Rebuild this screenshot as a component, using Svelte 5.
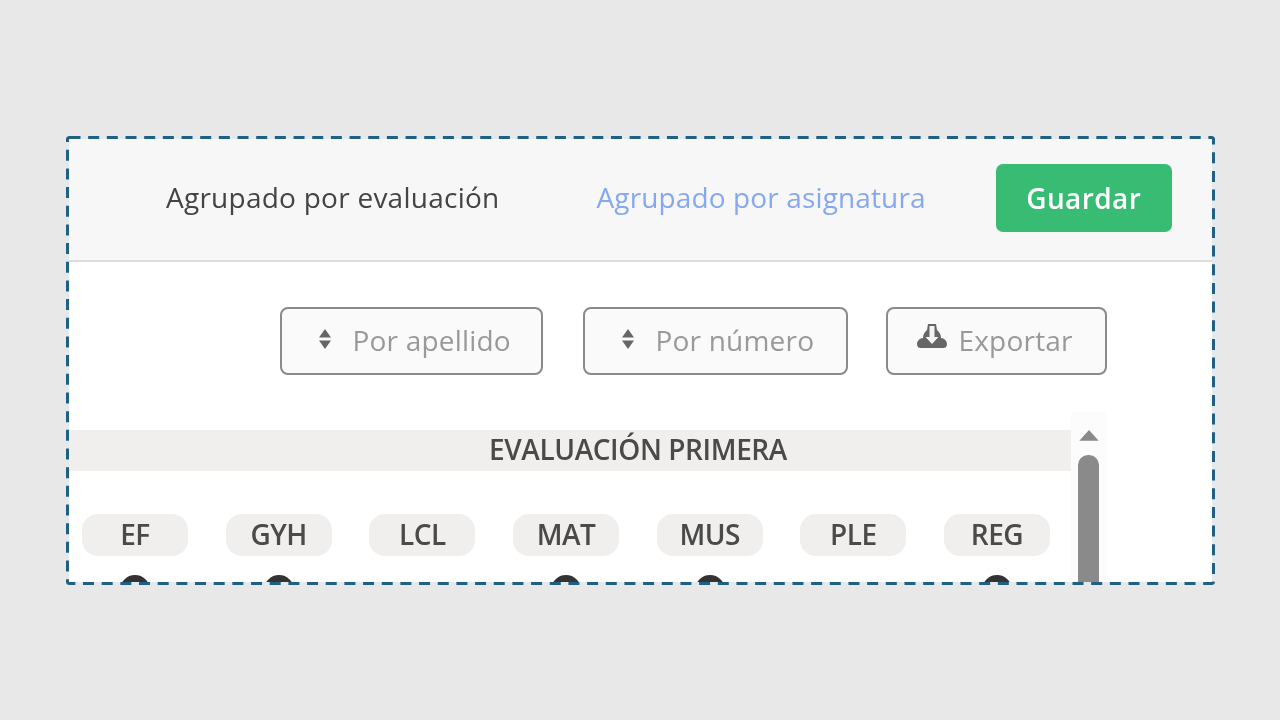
<script>
  const subjects = [
    { name: 'EF', icon: true },
    { name: 'GYH', icon: true },
    { name: 'LCL', icon: false },
    { name: 'MAT', icon: true },
    { name: 'MUS', icon: true },
    { name: 'PLE', icon: false },
    { name: 'REG', icon: true }
  ];
</script>

<div class="frame">
  <div class="panel">
    <header class="head">
      <span class="tab">Agrupado por evaluación</span>
      <span class="tab link">Agrupado por asignatura</span>
      <button class="save">Guardar</button>
    </header>

    <div class="tools">
      <button class="tool sort">
        <svg width="14" height="20" viewBox="0 0 14 20"><path d="M7 0l6 8.500H1zM7 20l-6-8.500h12z" fill="#666" /></svg>
        <span>Por apellido</span>
      </button>
      <button class="tool sort second">
        <svg width="14" height="20" viewBox="0 0 14 20"><path d="M7 0l6 8.500H1zM7 20l-6-8.500h12z" fill="#666" /></svg>
        <span>Por número</span>
      </button>
      <button class="tool export">
        <svg width="32" height="26" viewBox="0 0 32 26">
          <path d="M12 1h8l1 6c2 2 4 4 4 8 3 0 6 3 6 6 0 3-2 4-4 4H5c-2 0-4-1-4-4 0-3 3-6 6-6 0-4 2-6 4-8z" fill="#666" />
          <path d="M13.500 3h5v11h4l-6.500 7-6.500-7h4z" fill="#f4f4f4" />
        </svg>
        <span>Exportar</span>
      </button>
    </div>

    <div class="table">
      <div class="content">
        <div class="band">EVALUACIÓN PRIMERA</div>
        <div class="cols">
          {#each subjects as s}
            <div class="col">
              <span class="pill">{s.name}</span>
              {#if s.icon}<i class="dot"></i>{/if}
            </div>
          {/each}
        </div>
      </div>
      <div class="scroll">
        <svg width="22" height="13" viewBox="0 0 22 13"><path d="M11 1l10 11H1z" fill="#8a8a8a" /></svg>
        <div class="thumb"></div>
      </div>
    </div>
  </div>
  <svg class="dashes" width="1149" height="449" viewBox="0 0 1149 449">
    <rect x="1.5" y="1.5" width="1146" height="446" rx="2" />
  </svg>
</div>

<style>
  :global(body) {
    margin: 0;
    background: #e8e8e8;
    font-family: "Open Sans", sans-serif;
  }
  .frame {
    position: relative;
    width: 1149px;
    height: 449px;
    margin: 136px 0 0 66px;
    filter: blur(0.5px);
  }
  .dashes {
    position: absolute;
    inset: 0;
    pointer-events: none;
  }
  .dashes rect {
    fill: none;
    stroke: #1f6083;
    stroke-width: 3;
    stroke-dasharray: 11 7.67;
  }
  .panel {
    box-sizing: border-box;
    height: 100%;
    margin: 0;
    border: 3px solid #e4e9ec;
    background: #fff;
    overflow: hidden;
  }
  .head {
    box-sizing: border-box;
    height: 123px;
    display: flex;
    align-items: center;
    padding: 0 0 3px 97px;
    background: #f7f7f7;
    border-bottom: 2px solid #ddd;
  }
  .tab {
    padding-bottom: 2px;
    font-size: 28px;
    color: #444;
    letter-spacing: 0.25px;
    white-space: nowrap;
  }
  .link {
    color: #86a8ee;
    letter-spacing: 0.13px;
    margin-left: 97px;
  }
  .save {
    width: 176px;
    height: 68px;
    margin-left: 70px;
    padding-bottom: 2px;
    border: 0;
    border-radius: 7px;
    background: #38bc74;
    color: #fff;
    font: 600 28px "Open Sans", sans-serif;
    letter-spacing: 0.4px;
  }
  .tools {
    display: flex;
    padding: 45px 0 0 210.5px;
  }
  .tool {
    box-sizing: border-box;
    height: 68px;
    display: flex;
    align-items: center;
    padding: 0 0 2px;
    border: 2.5px solid #8a8a8a;
    border-radius: 8px;
    background: #fafafa;
    color: #999;
    font: 28px "Open Sans", sans-serif;
    letter-spacing: 0.2px;
  }
  .sort {
    width: 263px;
    gap: 21px;
    padding-left: 36px;
    margin-right: 40px;
  }
  .second {
    width: 265px;
    margin-right: 38px;
  }
  .export {
    width: 221px;
    gap: 11px;
    padding-left: 28px;
  }
  .export svg {
    margin-top: -8px;
  }
  .sort svg {
    margin-top: -3px;
  }
  .table {
    display: flex;
    width: 1037px;
    margin-top: 37px;
  }
  .content {
    width: 1002px;
  }
  .band {
    height: 41px;
    margin-top: 18px;
    background: #f0efed;
    color: #4a4a4a;
    font-size: 28px;
    font-weight: 600;
    line-height: 39px;
    letter-spacing: -0.4px;
    text-align: center;
    text-indent: 136px;
  }
  .cols {
    display: flex;
    gap: 37.67px;
    padding: 43px 0 0 13px;
  }
  .col {
    width: 106px;
    display: flex;
    flex-direction: column;
    align-items: center;
    gap: 19px;
  }
  .pill {
    width: 100%;
    height: 42px;
    border-radius: 16px;
    background: #f0efed;
    color: #4a4a4a;
    font-size: 28px;
    font-weight: 600;
    line-height: 40px;
    letter-spacing: -0.5px;
    text-align: center;
  }
  .dot {
    width: 30px;
    height: 30px;
    flex: none;
    box-sizing: border-box;
    border: 8px solid #333;
    border-radius: 50%;
    background: #fff;
  }
  .scroll {
    width: 35px;
    flex: none;
    display: flex;
    flex-direction: column;
    align-items: center;
    height: 200px;
    background: #fcfcfc;
    padding-top: 17px;
  }
  .thumb {
    width: 21px;
    height: 180px;
    margin-top: 13px;
    border-radius: 10px 10px 0 0;
    background: #8a8a8a;
  }
</style>
